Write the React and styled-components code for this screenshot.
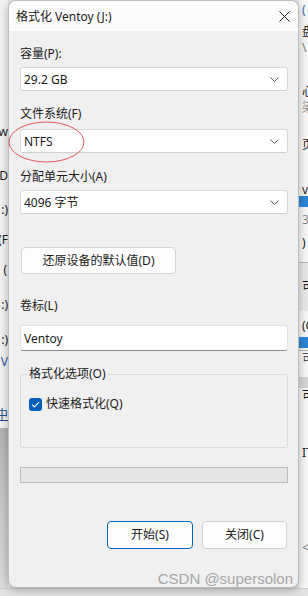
import React from 'react';
import styled, { createGlobalStyle } from 'styled-components';

const FONT = `"Noto Sans", "Noto Sans CJK SC", sans-serif`;

const Global = createGlobalStyle`
  html, body { margin: 0; padding: 0; }
  body {
    width: 308px; height: 596px; overflow: hidden;
    background: #e6e6e6;
    font-family: ${FONT};
    -webkit-font-smoothing: antialiased;
  }
`;

const Screen = styled.div`
  display: grid;
  grid-template-columns: 8px 291px 9px;
  grid-template-rows: 588px 8px;
  width: 308px;
  height: 596px;
  overflow: hidden;
`;

/* ---------- background window fragments ---------- */
const Strip = styled.div`
  display: flex;
  flex-direction: column;
  overflow: hidden;
  background: ${p => p.$bg};
  align-items: stretch;
`;

const Frag = styled.div`
  flex: 0 0 ${p => p.$h}px;
  height: ${p => p.$h}px;
  line-height: ${p => p.$h}px;
  font-size: 12px;
  font-family: ${FONT};
  color: ${p => p.$c || '#1a1a1a'};
  background: ${p => p.$bg || 'transparent'};
  border-top: ${p => (p.$line ? '1px solid #b4b4b4' : 'none')};
  box-sizing: border-box;
  white-space: nowrap;
  overflow: hidden;
  display: flex;
  justify-content: ${p => (p.$end ? 'flex-end' : 'flex-start')};
  align-items: ${p => (p.$bottom ? 'flex-end' : 'center')};
  padding: ${p => (p.$end ? `0 ${p.$pr || 0}px 0 0` : '0 0 0 3px')};
  text-decoration: ${p => (p.$u ? 'underline' : 'none')};
`;

const BottomBand = styled.div`
  grid-column: 1 / 4;
  background: #e3e3e3;
  border-top: 1px solid #d0d0d0;
`;

const leftFrags = [
  { h: 124 }, { h: 16, t: 'w' }, { h: 28 }, { h: 16, t: '(D' }, { h: 18 },
  { h: 16, t: ':)' }, { h: 14 }, { h: 16, t: '(F' }, { h: 14 },
  { h: 16, t: '(', pr: 1 }, { h: 19 }, { h: 16, t: ':)' }, { h: 19 },
  { h: 16, t: ':)' }, { h: 6 }, { h: 16, t: 'V', c: '#2a5aa0' }, { h: 37 },
  { h: 16, t: '选中', c: '#1e4f8f', u: true }, { h: 5 },
  { h: 160, bg: 'linear-gradient(#b3b3b3, #dcdcdc)' },
];

const rightFrags = [
  { h: 2 }, { h: 16, t: '(', c: '#2f6fc0' }, { h: 6 }, { h: 16, t: '盘' },
  { h: 16, t: '\\', c: '#777' }, { h: 28 }, { h: 16, t: '心' },
  { h: 16, t: '染', c: '#888' }, { h: 21 }, { h: 16, t: '页' }, { h: 31 },
  { h: 12, t: 'vs' }, { h: 11, bg: '#2b86d6' }, { h: 5 },
  { h: 16, t: '3 T', c: '#888' }, { h: 7 }, { h: 16, t: ')' }, { h: 11 },
  { h: 49, bg: '#e8e8e8', line: true, t: '可', bottom: true }, { h: 7 },
  { h: 16, t: '(G' }, { h: 3 }, { h: 11, bg: '#2b86d6' }, { h: 2 },
  { h: 16, t: '可', c: '#555', line: true }, { h: 11 },
  { h: 11, bg: '#d6d6d6' }, { h: 16, t: '可' }, { h: 41 },
  { h: 16, t: 'IT' }, { h: 79 }, { h: 16, t: '<', c: '#777' }, { h: 32 },
];

/* ---------- dialog ---------- */
const Dialog = styled.div`
  position: relative;
  z-index: 1;
  display: flex;
  flex-direction: column;
  background: #f0f0f0;
  border: 1px solid #bdbdbd;
  border-radius: 8px;
  box-shadow: 0 2px 10px rgba(0, 0, 0, 0.28);
  font-family: ${FONT};
  color: #1b1b1b;
  overflow: visible;
`;

const TitleBar = styled.div`
  height: 30px;
  flex: 0 0 30px;
  display: flex;
  align-items: center;
  justify-content: space-between;
  padding: 0 8px 0 7px;
  background: #fbfbfb;
  border-radius: 7px 7px 0 0;
  font-size: 12px;
`;

const Title = styled.span`
  line-height: 16px;
  padding-top: 1px;
`;

const Body = styled.div`
  display: flex;
  flex-direction: column;
  padding: 0 10px 0 11px;
`;

const Label = styled.div`
  margin-top: ${p => p.$mt}px;
  font-size: 12px;
  line-height: 16px;
  height: 16px;
`;

const Select = styled.div`
  margin-top: ${p => p.$mt}px;
  height: 24px;
  box-sizing: border-box;
  background: #ffffff;
  border: 1px solid #d9d9d9;
  border-bottom-color: #cfcfcf;
  border-radius: 3px;
  display: flex;
  align-items: center;
  justify-content: space-between;
  padding: 0 4px 0 3px;
  font-size: 12px;
`;

const TextBox = styled.div`
  margin-top: ${p => p.$mt}px;
  height: 26px;
  box-sizing: border-box;
  background: #ffffff;
  border: 1px solid #e2e2e2;
  border-bottom: 1px solid #8a8a8a;
  border-radius: 3px;
  display: flex;
  align-items: center;
  padding: 0 3px;
  font-size: 12px;
`;

const Button = styled.button`
  margin-top: ${p => p.$mt || 0}px;
  margin-left: ${p => p.$ml || 0}px;
  width: ${p => p.$w}px;
  height: ${p => p.$h}px;
  box-sizing: border-box;
  background: #fdfdfd;
  border: 1px solid ${p => (p.$primary ? '#0067c0' : '#d3d3d3')};
  border-radius: 4px;
  font-family: ${FONT};
  font-size: 12px;
  line-height: 16px;
  color: #1b1b1b;
  padding: 0;
  display: flex;
  align-items: center;
  justify-content: center;
`;

const Group = styled.fieldset`
  margin: ${p => p.$mt}px 0 0 0;
  padding: 0 8px 35px 8px;
  min-width: 0;
  border: 1px solid #dadada;
  border-radius: 2px;
`;

const Legend = styled.legend`
  padding: 0 2px;
  margin-left: -2px;
  font-size: 12px;
  line-height: 16px;
  color: #1b1b1b;
`;

const CheckRow = styled.label`
  margin-top: 14px;
  display: flex;
  align-items: center;
  gap: 4px;
  height: 16px;
  font-size: 12px;
  line-height: 16px;
`;

const CheckBox = styled.span`
  width: 13px;
  height: 13px;
  border-radius: 3px;
  background: #005fb8;
  display: flex;
  align-items: center;
  justify-content: center;
`;

const Progress = styled.div`
  margin-top: ${p => p.$mt}px;
  height: 16px;
  box-sizing: border-box;
  background: #e6e6e6;
  border: 1px solid #bcbcbc;
`;

const ButtonRow = styled.div`
  margin-top: ${p => p.$mt}px;
  display: flex;
  justify-content: flex-end;
  gap: 9px;
  margin-right: 1px;
`;

const Watermark = styled.div`
  margin-top: ${p => p.$mt}px;
  margin-right: -5px;
  text-align: right;
  font-family: "Liberation Sans", Arial, sans-serif;
  font-size: 15px;
  line-height: 17px;
  color: #a6a6a6;
`;

const Annotation = styled.svg`
  position: absolute;
  left: -1px;
  top: 120px;
  pointer-events: none;
`;

const Chevron = () => (
  <svg width="9" height="5" viewBox="0 0 9 5" style={{ marginRight: 4 }}>
    <path d="M0.5 0.5 L4.5 4.5 L8.5 0.5" fill="none" stroke="#5f5f5f" strokeWidth="1" />
  </svg>
);

const CloseIcon = () => (
  <svg width="11" height="11" viewBox="0 0 11 11">
    <path d="M0.5 0.5 L10.5 10.5 M10.5 0.5 L0.5 10.5" stroke="#1f1f1f" strokeWidth="1" fill="none" />
  </svg>
);

const Check = () => (
  <svg width="9" height="7" viewBox="0 0 9 7">
    <path d="M1 3.6 L3.4 6 L8 1.2" fill="none" stroke="#ffffff" strokeWidth="1.1" />
  </svg>
);

function Strips({ items, bg, end }) {
  return (
    <Strip $bg={bg}>
      {items.map((f, i) => (
        <Frag
          key={i}
          $h={f.h}
          $c={f.c}
          $bg={f.bg}
          $line={f.line}
          $u={f.u}
          $bottom={f.bottom}
          $end={end}
          $pr={f.pr}
        >
          {f.t || ''}
        </Frag>
      ))}
    </Strip>
  );
}

export default function App() {
  return (
    <>
      <Global />
      <Screen>
        <Strips items={leftFrags} bg="#f2f2f2" end />
        <Dialog>
          <TitleBar>
            <Title>格式化 Ventoy (J:)</Title>
            <CloseIcon />
          </TitleBar>
          <Body>
            <Label $mt={15}>容量(P):</Label>
            <Select $mt={5}>
              <span>29.2 GB</span>
              <Chevron />
            </Select>
            <Label $mt={15}>文件系统(F)</Label>
            <Select $mt={7}>
              <span>NTFS</span>
              <Chevron />
            </Select>
            <Label $mt={16}>分配单元大小(A)</Label>
            <Select $mt={5}>
              <span>4096 字节</span>
              <Chevron />
            </Select>
            <Button $mt={33} $ml={1} $w={155} $h={27}>还原设备的默认值(D)</Button>
            <Label $mt={24}>卷标(L)</Label>
            <TextBox $mt={11}>Ventoy</TextBox>
            <Group $mt={15}>
              <Legend>格式化选项(O)</Legend>
              <CheckRow>
                <CheckBox><Check /></CheckBox>
                <span>快速格式化(Q)</span>
              </CheckRow>
            </Group>
            <Progress $mt={19} />
            <ButtonRow $mt={38}>
              <Button $primary $w={86} $h={28}>开始(S)</Button>
              <Button $w={85} $h={28}>关闭(C)</Button>
            </ButtonRow>
            <Watermark $mt={21}>CSDN @supersolon</Watermark>
          </Body>
          <Annotation width="77" height="42" viewBox="0 0 77 42">
            <ellipse cx="38.5" cy="21" rx="37.5" ry="20" fill="none" stroke="#e4585c" strokeWidth="1" />
          </Annotation>
        </Dialog>
        <Strips items={rightFrags} bg="#f7f7f7" />
        <BottomBand />
      </Screen>
    </>
  );
}
